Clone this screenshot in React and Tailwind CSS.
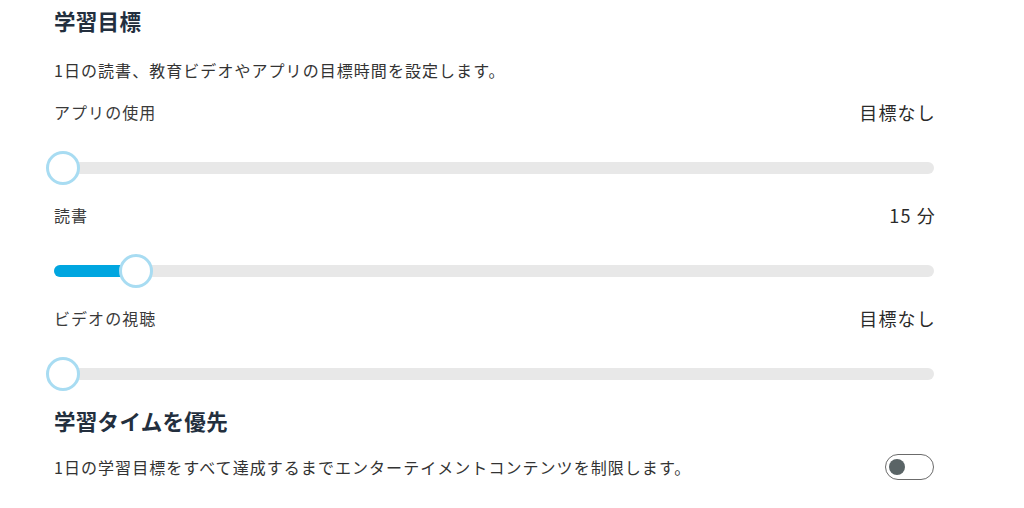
import { useState } from 'react';

const font = { fontFamily: '"Noto Sans CJK JP", "Noto Sans", sans-serif' };

const goals = [
  { id: 'apps', label: 'アプリの使用', value: '目標なし', fill: 0 },
  { id: 'books', label: '読書', value: '15 分', fill: 73 },
  { id: 'video', label: 'ビデオの視聴', value: '目標なし', fill: 0 },
];

function GoalSlider({ label, value, fill }) {
  return (
    <div className="mb-[11px]">
      <div className="flex h-[32px] items-center justify-between">
        <span className="text-[16px] tracking-[1.05px] text-[#3a3a3a]">{label}</span>
        <span className="-mr-[2px] text-[18px] tracking-[1.2px] text-[#2a2a2a]">{value}</span>
      </div>
      <div className="mt-[20px] flex h-[40px] items-center">
        <div className="relative h-[12px] w-full rounded-full bg-[#e8e8e8]">
          {fill > 0 && (
            <div
              className="absolute left-0 top-0 h-[12px] rounded-full bg-[#00a6e0]"
              style={{ width: fill }}
            />
          )}
          <div
            className="absolute top-1/2 h-[34px] w-[34px] -translate-y-1/2 rounded-full border-[3px] border-[#a8dcf2] bg-white"
            style={{ left: fill - 8 }}
          />
        </div>
      </div>
    </div>
  );
}

export default function App() {
  const [prioritize, setPrioritize] = useState(false);

  return (
    <div className="h-[508px] w-[1024px] overflow-hidden bg-white pl-[54px] pr-[90px] pt-[5px]" style={font}>
      {/* 学習目標 */}
      <div className="flex h-[32px] items-center text-[21.5px] font-bold tracking-[0.3px] text-[#232f3e]">学習目標</div>
      <div className="mt-[17px] flex h-[32px] items-center text-[16px] tracking-[1.05px] text-[#333333]">
        1日の読書、教育ビデオやアプリの目標時間を設定します。
      </div>

      <div className="mt-[10px]">
        {goals.map((g) => (
          <GoalSlider key={g.id} label={g.label} value={g.value} fill={g.fill} />
        ))}
      </div>

      {/* 学習タイムを優先 */}
      <div className="mt-[2px] flex h-[32px] items-center text-[21.5px] font-bold tracking-[0.3px] text-[#232f3e]">学習タイムを優先</div>
      <div className="mt-[14px] flex h-[32px] items-center justify-between">
        <span className="text-[16px] tracking-[1.05px] text-[#333333]">
          1日の学習目標をすべて達成するまでエンターテイメントコンテンツを制限します。
        </span>
        <button
          onClick={() => setPrioritize(!prioritize)}
          className={`flex h-[26px] w-[49px] items-center rounded-full border-[1.5px] border-[#6b6b6b] bg-white px-[3px] ${prioritize ? 'justify-end' : 'justify-start'}`}
        >
          <span className="h-[16px] w-[16px] rounded-full bg-[#5a6466]" />
        </button>
      </div>
    </div>
  );
}
